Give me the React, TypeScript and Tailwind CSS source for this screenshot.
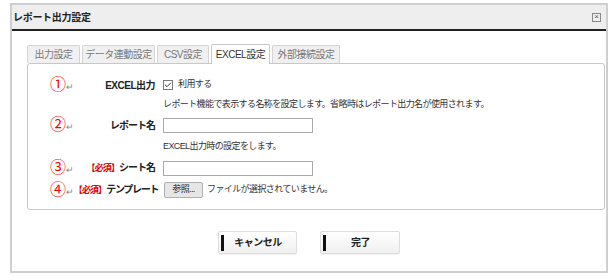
import { Check } from 'lucide-react';

const tabs = [
  { label: '出力設定', w: 'w-[53px]' },
  { label: 'データ連動設定', w: 'w-[73px]' },
  { label: 'CSV設定', w: 'w-[52px]' },
  { label: 'EXCEL設定', w: 'w-[59px]', active: true },
  { label: '外部接続設定', w: 'w-[68px]' },
];

function Num({ n }: { n: string }) {
  return (
    <span className="flex items-center">
      <span className="text-[16px] leading-none text-[#ff0000]">{n}</span>
      <span className="text-[9px] leading-none text-[#888] ml-[1px] mt-[4px]">↵</span>
    </span>
  );
}

function Req() {
  return <span className="text-[9px] tracking-[-0.9px] text-[#e00000]">【必須】</span>;
}

export default function App() {
  return (
    <div
      className="w-[612px] h-[276px] bg-white pt-[3px] pl-[10px] text-[#333]"
      style={{ fontFamily: '"Liberation Sans", "Noto Sans CJK JP", sans-serif' }}
    >
      {/* window */}
      <div className="w-[598px] h-[270px] border-2 border-[#cfcfcf] flex flex-col">
        <div className="h-[26px] bg-[#eeeeee] border-b-2 border-[#222] flex items-center justify-between pl-[1px] pr-[5px]">
          <span className="text-[10px] font-bold text-[#222] tracking-[-0.3px]">レポート出力設定</span>
          <span className="w-[9px] h-[9px] border border-[#888] flex items-center justify-center text-[8px] leading-none text-[#555]">×</span>
        </div>

        <div className="pl-[15px] pr-[2px] pt-[13px]">
          {/* tabs */}
          <div className="flex items-end gap-[2px] h-[19px]">
            {tabs.map(t =>
              t.active ? (
                <div
                  key={t.label}
                  className={`${t.w} h-[20px] -mb-px relative z-10 bg-white border border-b-0 border-[#c8c8c8] rounded-t-[2px] flex items-center justify-center text-[10px] tracking-[-0.5px] text-[#333]`}
                >
                  {t.label}
                </div>
              ) : (
                <div
                  key={t.label}
                  className={`${t.w} h-[18px] bg-[#f0f0f0] border border-b-0 border-[#d4d4d4] rounded-t-[2px] flex items-center justify-center text-[10px] tracking-[-0.5px] text-[#777]`}
                >
                  {t.label}
                </div>
              )
            )}
          </div>

          {/* panel */}
          <div className="w-[578px] border border-[#c8c8c8] rounded-[3px] pt-[11px] pb-[8px] text-[9px] tracking-[-0.6px]">
            <div className="grid grid-cols-[127px_1fr] gap-x-[8px]">
              <div className="h-[20px] flex items-center justify-between pl-[22px] whitespace-nowrap">
                <Num n="①" />
                <span className="text-[10px] font-bold text-[#222] tracking-[-0.5px]">EXCEL出力</span>
              </div>
              <div className="h-[20px] flex items-center gap-[5px]">
                <span className="w-[10px] h-[10px] border border-[#777] flex items-center justify-center">
                  <Check className="w-[8px] h-[8px] text-[#333]" strokeWidth={3} />
                </span>
                <span>利用する</span>
              </div>

              <div className="h-[19px]" />
              <div className="h-[19px] flex items-center whitespace-nowrap">
                レポート機能で表示する名称を設定します。省略時はレポート出力名が使用されます。
              </div>

              <div className="h-[22px] flex items-center justify-between pl-[22px] whitespace-nowrap">
                <Num n="②" />
                <span className="text-[10px] font-bold text-[#222] tracking-[-1px]">レポート名</span>
              </div>
              <div className="h-[22px] flex items-center">
                <div className="w-[150px] h-[15px] border border-[#aaa] bg-white" />
              </div>

              <div className="h-[21px]" />
              <div className="h-[21px] flex items-center whitespace-nowrap">EXCEL出力時の設定をします。</div>

              <div className="h-[22px] flex items-center justify-between pl-[22px] whitespace-nowrap">
                <Num n="③" />
                <span className="text-[10px] font-bold text-[#222] tracking-[-1px]">
                  <Req />シート名
                </span>
              </div>
              <div className="h-[22px] flex items-center">
                <div className="w-[150px] h-[15px] border border-[#aaa] bg-white" />
              </div>

              <div className="h-[22px] flex items-center justify-between pl-[22px] whitespace-nowrap">
                <Num n="④" />
                <span className="text-[10px] font-bold text-[#222] tracking-[-1.3px]">
                  <Req />テンプレート
                </span>
              </div>
              <div className="h-[22px] flex items-center gap-[4px] whitespace-nowrap">
                <span className="w-[39px] h-[16px] ml-px bg-[#e6e6e6] border border-[#b0b0b0] rounded-[2px] flex items-center justify-center text-[9px] text-[#222]">
                  参照...
                </span>
                <span>ファイルが選択されていません。</span>
              </div>
            </div>
          </div>
        </div>

        {/* footer buttons */}
        <div className="flex justify-center gap-[23px] mt-[21px]">
          {['キャンセル', '完了'].map((label, i) => (
            <div
              key={label}
              className={`${i === 0 ? 'w-[79px]' : 'w-[80px]'} h-[23px] bg-gradient-to-b from-white to-[#f0f0f0] border border-[#dedede] rounded-[2px] flex items-center pl-[2px] shadow-[0_1px_1px_rgba(0,0,0,0.06)]`}
            >
              <span className="w-[3px] h-[16px] bg-[#111]" />
              <span className="flex-1 text-center text-[10px] font-bold text-[#222] tracking-[-0.5px] pr-[4px]">{label}</span>
            </div>
          ))}
        </div>
      </div>
    </div>
  );
}
